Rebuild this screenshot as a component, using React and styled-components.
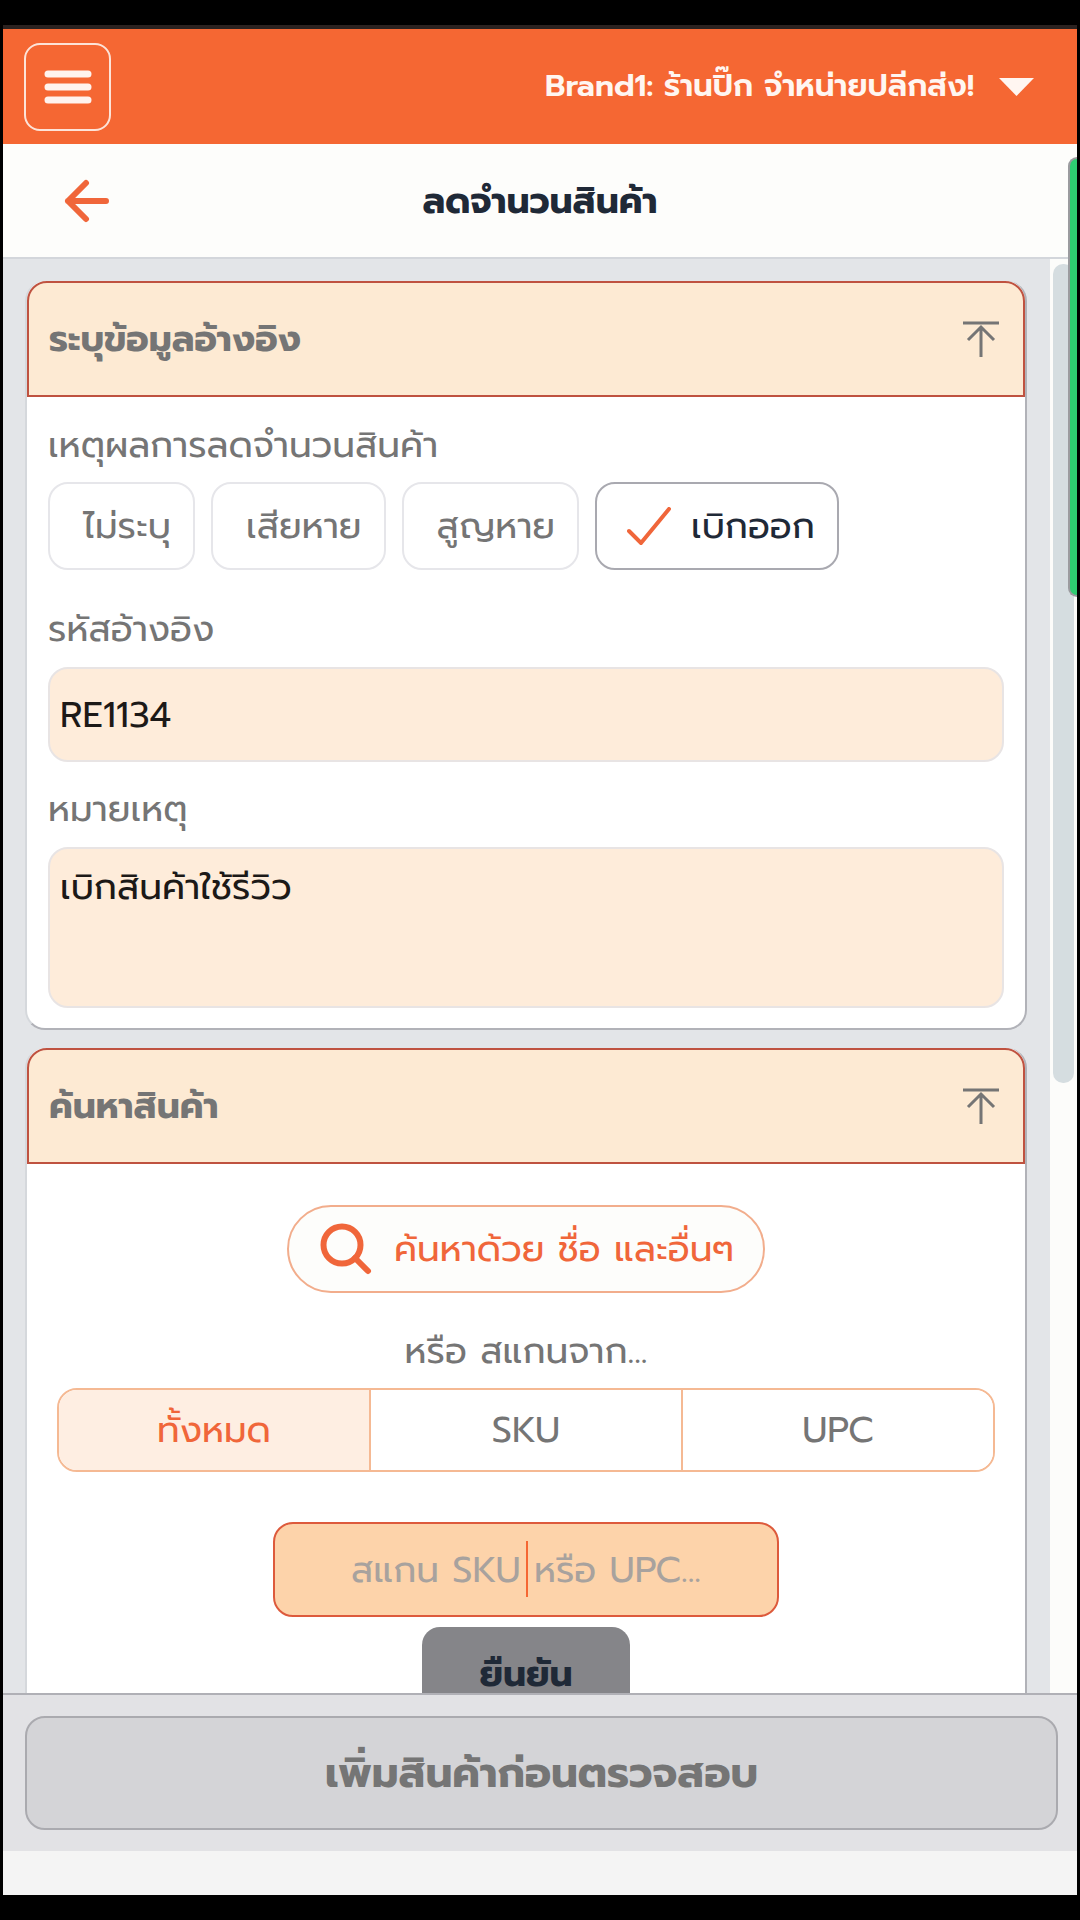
import React, { useState } from 'react'
import styled, { createGlobalStyle } from 'styled-components'

const GlobalStyle = createGlobalStyle`
    * {
        box-sizing: border-box;
    }
    body {
        margin: 0;
        background-color: #000;
    }
    body, button, input, textarea, select {
        font-family: "Prompt", "Noto Sans Thai", "Noto Sans", sans-serif;
    }
`;

const Screen = styled.div`
    position: relative;
    display: flex;
    flex-direction: column;
    height: 100vh;
    border: solid #000;
    border-width: 25px 3px;
    background-color: #f4f4f4;
    color: #757575;
    font-size: 36px;
    line-height: 48px;
`;

const TopBar = styled.header`
    display: flex;
    align-items: center;
    justify-content: space-between;
    flex: none;
    height: 119px;
    padding: 0 43px 0 21px;
    border-top: 4px solid #2b2220;
    background-color: #f56733;
`;

const MenuButton = styled.button`
    display: flex;
    align-items: center;
    justify-content: center;
    width: 87px;
    height: 88px;
    padding: 0;
    border: 2px solid #fde3d8;
    border-radius: 16px;
    background: none;
    cursor: pointer;
`;

const BrandPicker = styled.label`
    display: flex;
    align-items: center;
    gap: 24px;
`;

const BrandSelect = styled.select`
    appearance: none;
    padding: 0 0 2px;
    border: none;
    background: none;
    color: #fff6f1;
    font-size: 31px;
    font-weight: 600;
    line-height: 56px;
    cursor: pointer;
`;

const TitleBar = styled.div`
    display: grid;
    grid-template-columns: 1fr auto 1fr;
    align-items: center;
    flex: none;
    height: 115px;
    padding: 0 60px;
    border-bottom: 2px solid #d3d6db;
    background-color: #fdfdfb;
`;

const BackButton = styled.button`
    display: flex;
    justify-self: start;
    padding: 0;
    border: none;
    background: none;
    cursor: pointer;
`;

const Title = styled.h1`
    margin: 0;
    color: #1f2937;
    font-size: 36px;
    font-weight: 700;
`;

const Main = styled.main`
    display: flex;
    flex: 1;
    min-height: 0;
    overflow: hidden;
`;

const Content = styled.div`
    display: flex;
    flex-direction: column;
    flex: 1;
    gap: 18px;
    padding: 22px 23px 22px 22px;
    background-color: #e3e5e8;
`;

const ScrollTrack = styled.div`
    flex: none;
    width: 27px;
    padding: 5px 3px;
    background-color: #fcfcfa;
`;

const ScrollThumb = styled.div`
    height: 57.5%;
    border-radius: 10px;
    background-color: #d5dde0;
`;

const SideTab = styled.button`
    position: absolute;
    top: 132px;
    right: 0;
    width: 9px;
    height: 440px;
    padding: 0;
    border: 2px solid #9b9b9f;
    border-right: none;
    border-radius: 12px 0 0 12px;
    background-color: #2ecc71;
    cursor: pointer;
`;

const Card = styled.section`
    border: 2px solid #b1b2b8;
    border-top: none;
    border-left-color: #d5d8dc;
    border-radius: 20px;
    background-color: #fff;
`;

const CardHeader = styled.div`
    display: flex;
    align-items: center;
    justify-content: space-between;
    height: 116px;
    padding: 0 24px 0 20px;
    border: 2px solid #bf5240;
    border-radius: 20px 20px 0 0;
    background-color: #fdead3;
`;

const CardTitle = styled.h2`
    margin: 0;
    font-size: 36px;
    font-weight: 700;
`;

const CollapseButton = styled.button`
    display: flex;
    padding: 0;
    border: none;
    background: none;
    cursor: pointer;
`;

const CardBody = styled.div`
    display: flex;
    flex-direction: column;
    align-items: ${({ $center }) => ($center ? 'center' : 'stretch')};
    padding: ${({ $center }) => ($center ? '41px 21px' : '24px 21px 20px')};
`;

const Caption = styled.label`
    margin-bottom: 14px;
`;

const ReasonGroup = styled.fieldset`
    min-width: 0;
    margin: 0 0 35px;
    padding: 0;
    border: none;
`;

const Legend = styled.legend`
    margin-bottom: 13px;
    padding: 0;
`;

const Chips = styled.div`
    display: flex;
    flex-wrap: wrap;
    gap: 16px;
`;

const HiddenRadio = styled.input`
    position: absolute;
    opacity: 0;
    pointer-events: none;
`;

const Chip = styled.label`
    display: flex;
    align-items: center;
    gap: 20px;
    height: 88px;
    padding: ${({ $active }) => ($active ? '0 22px 0 30px' : '0 22px 0 33px')};
    border: 2px solid ${({ $active }) => ($active ? '#a9a9b0' : '#e6e6ea')};
    border-radius: 20px;
    color: ${({ $active }) => ($active ? '#1f2937' : '#757575')};
    cursor: pointer;
`;

const TextInput = styled.input`
    height: 95px;
    margin-bottom: 23px;
    padding: 0 10px;
    border: 2px solid #e8e4e4;
    border-radius: 20px;
    background-color: #feecda;
    color: #1c1917;
    font-size: 36px;
`;

const TextArea = styled.textarea`
    height: 161px;
    padding: 14px 10px;
    border: 2px solid #e8e4e4;
    border-radius: 20px;
    background-color: #feecda;
    color: #1c1917;
    font-size: 36px;
    line-height: 48px;
    resize: none;
`;

const SearchButton = styled.button`
    display: flex;
    align-items: center;
    gap: 22px;
    height: 88px;
    padding: 0 29px 0 31px;
    border: 2px solid #f2ad8c;
    border-radius: 44px;
    background-color: #fdfdfb;
    color: #f0663a;
    font-size: 36px;
    cursor: pointer;
`;

const Hint = styled.p`
    margin: 34px 0 13px;
`;

const Segments = styled.div`
    display: flex;
    align-self: stretch;
    height: 84px;
    margin: 0 9px 50px;
    border: 2px solid #f5b993;
    border-radius: 20px;
    overflow: hidden;
`;

const Segment = styled.label`
    display: flex;
    align-items: center;
    justify-content: center;
    flex: 1;
    background-color: ${({ $active }) => ($active ? '#feeee2' : '#fff')};
    color: ${({ $active }) => ($active ? '#f0663a' : '#757575')};
    cursor: pointer;

    & + & {
        border-left: 2px solid #f5b993;
    }
`;

const ScanBox = styled.div`
    position: relative;
    width: 53%;
    margin-bottom: 10px;
`;

const ScanInput = styled.input`
    display: block;
    width: 100%;
    height: 95px;
    padding: 0 20px;
    border: 2px solid #dd5a3c;
    border-radius: 20px;
    background-color: #fdd3aa;
    color: #1c1917;
    font-size: 36px;
    text-align: center;

    &::placeholder {
        color: #a8a29e;
        opacity: 1;
    }
`;

const Cursor = styled.span`
    position: absolute;
    top: 19px;
    left: 50%;
    width: 2px;
    height: 56px;
    background-color: #f56733;
`;

const ConfirmButton = styled.button`
    height: 94px;
    padding: 0 58px;
    border: none;
    border-radius: 18px;
    background-color: #858589;
    color: #1f2937;
    font-size: 36px;
    font-weight: 700;
    cursor: pointer;
`;

const Footer = styled.footer`
    flex: none;
    margin-bottom: 44px;
    padding: 21px 19px 21px 22px;
    border-top: 2px solid #b0b0b6;
    background-color: #e2e2e5;
`;

const SubmitButton = styled.button`
    width: 100%;
    height: 114px;
    border: 2px solid #aaaaaf;
    border-radius: 20px;
    background-color: #d4d4d7;
    color: #757575;
    font-size: 42px;
    font-weight: 700;
`;

const reasons = ['ไม่ระบุ', 'เสียหาย', 'สูญหาย', 'เบิกออก'];
const scanModes = ['ทั้งหมด', 'SKU', 'UPC'];

const MenuIcon = () => (
    <svg width="48" height="34" viewBox="0 0 48 34" stroke="#fff3ee" strokeWidth="7" strokeLinecap="round">
        <path d="M4 4H44M4 17H44M4 30H44" />
    </svg>
)

const CaretIcon = () => (
    <svg width="35" height="18" viewBox="0 0 35 18" fill="#fff6f1">
        <path d="M0 0H35L17.500 18Z" />
    </svg>
)

const BackIcon = () => (
    <svg width="48" height="44" viewBox="0 0 48 44" fill="none" stroke="#f0663a" strokeWidth="6" strokeLinecap="round" strokeLinejoin="round">
        <path d="M43 22H5M23 4L5 22L23 40" />
    </svg>
)

const CollapseIcon = () => (
    <svg width="36" height="36" viewBox="0 0 36 36" fill="none" stroke="#757575" strokeWidth="3">
        <path d="M0 2H36M18 36V6M5 19L18 6L31 19" />
    </svg>
)

const CheckIcon = () => (
    <svg width="44" height="38" viewBox="0 0 44 38" fill="none" stroke="#f0663a" strokeWidth="4" strokeLinecap="round">
        <path d="M2 24L14 36L42 2" />
    </svg>
)

const SearchIcon = () => (
    <svg width="52" height="52" viewBox="0 0 52 52" fill="none" stroke="#f0663a" strokeWidth="6" strokeLinecap="round">
        <circle cx="22" cy="22" r="18.500" />
        <path d="M35 35L48 48" />
    </svg>
)

const Section = ({ title, center, children }) => (
    <Card>
        <CardHeader>
            <CardTitle>{title}</CardTitle>
            <CollapseButton aria-label={title}><CollapseIcon /></CollapseButton>
        </CardHeader>
        <CardBody $center={center}>{children}</CardBody>
    </Card>
)

const App = () => {
    const [reason, setReason] = useState('เบิกออก')
    const [mode, setMode] = useState('ทั้งหมด')

    return (
        <>
            <GlobalStyle />
            <Screen>
                <TopBar>
                    <MenuButton aria-label="เมนู"><MenuIcon /></MenuButton>
                    <BrandPicker>
                        <BrandSelect aria-label="ร้าน">
                            <option>Brand1: ร้านปิ๊ก จำหน่ายปลีกส่ง!</option>
                        </BrandSelect>
                        <CaretIcon />
                    </BrandPicker>
                </TopBar>
                <TitleBar>
                    <BackButton aria-label="กลับ"><BackIcon /></BackButton>
                    <Title>ลดจำนวนสินค้า</Title>
                </TitleBar>
                <Main>
                    <Content>
                        <Section title="ระบุข้อมูลอ้างอิง">
                            <ReasonGroup>
                                <Legend>เหตุผลการลดจำนวนสินค้า</Legend>
                                <Chips>
                                    {reasons.map((item) => (
                                        <Chip key={item} $active={item === reason}>
                                            <HiddenRadio
                                                type="radio"
                                                name="reason"
                                                checked={item === reason}
                                                onChange={() => setReason(item)}
                                            />
                                            {item === reason && <CheckIcon />}
                                            {item}
                                        </Chip>
                                    ))}
                                </Chips>
                            </ReasonGroup>
                            <Caption htmlFor="ref">รหัสอ้างอิง</Caption>
                            <TextInput id="ref" defaultValue="RE1134" />
                            <Caption htmlFor="note">หมายเหตุ</Caption>
                            <TextArea id="note" defaultValue="เบิกสินค้าใช้รีวิว" />
                        </Section>
                        <Section title="ค้นหาสินค้า" center>
                            <SearchButton>
                                <SearchIcon />
                                ค้นหาด้วย ชื่อ และอื่นๆ
                            </SearchButton>
                            <Hint>หรือ สแกนจาก...</Hint>
                            <Segments>
                                {scanModes.map((item) => (
                                    <Segment key={item} $active={item === mode}>
                                        <HiddenRadio
                                            type="radio"
                                            name="mode"
                                            checked={item === mode}
                                            onChange={() => setMode(item)}
                                        />
                                        {item}
                                    </Segment>
                                ))}
                            </Segments>
                            <ScanBox>
                                <ScanInput aria-label="สแกน" placeholder="สแกน SKU หรือ UPC..." />
                                <Cursor />
                            </ScanBox>
                            <ConfirmButton>ยืนยัน</ConfirmButton>
                        </Section>
                    </Content>
                    <ScrollTrack>
                        <ScrollThumb />
                    </ScrollTrack>
                </Main>
                <Footer>
                    <SubmitButton>เพิ่มสินค้าก่อนตรวจสอบ</SubmitButton>
                </Footer>
                <SideTab aria-label="แชท" />
            </Screen>
        </>
    )
}

export default App
